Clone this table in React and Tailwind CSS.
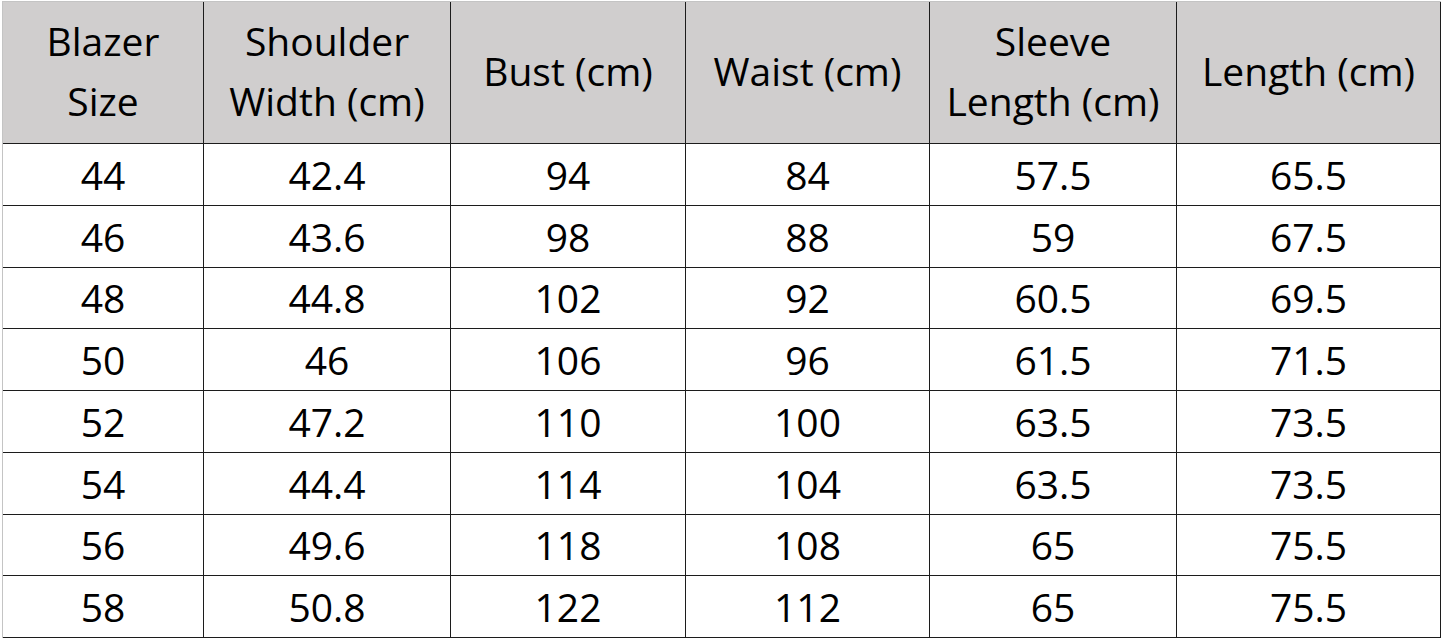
import React from "react";

const HEADERS = [
  ["Blazer", "Size"],
  ["Shoulder", "Width (cm)"],
  ["Bust (cm)"],
  ["Waist (cm)"],
  ["Sleeve", "Length (cm)"],
  ["Length (cm)"],
];

const ROWS = [
  ["44", "42.4", "94", "84", "57.5", "65.5"],
  ["46", "43.6", "98", "88", "59", "67.5"],
  ["48", "44.8", "102", "92", "60.5", "69.5"],
  ["50", "46", "106", "96", "61.5", "71.5"],
  ["52", "47.2", "110", "100", "63.5", "73.5"],
  ["54", "44.4", "114", "104", "63.5", "73.5"],
  ["56", "49.6", "118", "108", "65", "75.5"],
  ["58", "50.8", "122", "112", "65", "75.5"],
];

const App = () => {
  return (
    <div className="h-[640px] w-[1445px] overflow-hidden bg-white pl-[2px] pt-[1px]">
      <div
        className="grid w-max grid-cols-[201px_247px_235px_244px_247px_264px] grid-rows-[142px_repeat(8,61.75px)] border-l border-t border-[#c4c4c4] text-black"
        style={{ fontFamily: '"Open Sans", "Noto Sans", sans-serif' }}
      >
        {HEADERS.map((lines, i) => (
          <div
            key={`h-${i}`}
            className="flex flex-col items-center justify-center border-b border-r border-[#1c1c1c] bg-[#d0cece] pb-[4px] text-center text-[39px] leading-[60px]"
          >
            {lines.map((line) => (
              <span key={line}>{line}</span>
            ))}
          </div>
        ))}

        {ROWS.map((row, r) =>
          row.map((value, c) => (
            <div
              key={`${r}-${c}`}
              className="flex items-center justify-center border-b border-r border-[#1c1c1c] text-[39px] leading-none"
            >
              {value}
            </div>
          ))
        )}
      </div>
    </div>
  );
};

export default App;
